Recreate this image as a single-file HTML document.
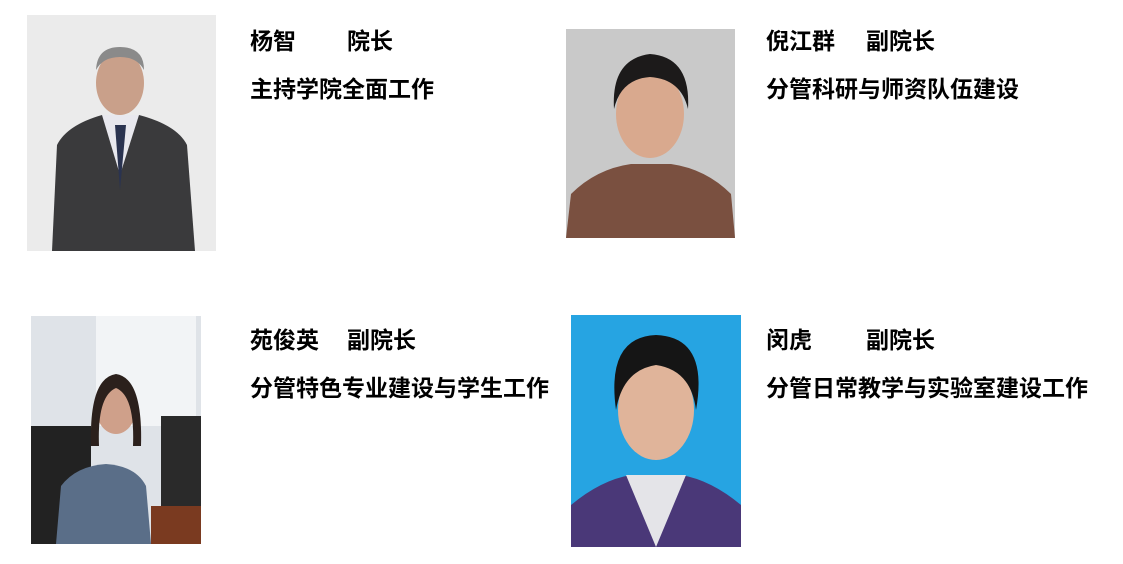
<!DOCTYPE html>
<html><head><meta charset="utf-8"><style>
body{margin:0;width:1123px;height:564px;background:#fff;position:relative;overflow:hidden;font-family:"Liberation Sans","Noto Sans CJK SC",sans-serif;}
.t{position:absolute;font-size:23px;font-weight:bold;color:#000;white-space:nowrap;line-height:26px;}
svg{position:absolute;}
</style></head><body>
<svg style="left:27px;top:15px" width="189" height="236" viewBox="0 0 189 236">
<rect width="189" height="236" fill="#ebebeb"/>
<path d="M25 236 L30 130 Q40 110 75 100 L112 100 Q150 110 160 130 L168 236 Z" fill="#3a3a3c"/>
<path d="M75 100 L93 160 L112 100 Z" fill="#e8e8ee"/>
<path d="M88 110 L93 175 L99 110 Z" fill="#2a3350"/>
<ellipse cx="93" cy="68" rx="24" ry="32" fill="#c9a08a"/>
<path d="M69 55 Q70 32 93 32 Q117 32 117 55 Q110 42 93 42 Q76 42 69 55Z" fill="#8a8a8a"/>
</svg>
<svg style="left:566px;top:29px" width="169" height="209" viewBox="0 0 169 209">
<rect width="169" height="209" fill="#c9c9c9"/>
<path d="M0 209 L5 165 Q30 140 65 135 L105 135 Q140 140 165 165 L169 209 Z" fill="#7a5040"/>
<ellipse cx="84" cy="85" rx="34" ry="44" fill="#d9a98e"/>
<path d="M48 80 Q45 30 84 25 Q125 28 122 80 Q115 50 84 48 Q55 50 48 80Z" fill="#1c1a1a"/>
</svg>
<svg style="left:31px;top:316px" width="170" height="228" viewBox="0 0 170 228">
<rect width="170" height="228" fill="#dfe3e8"/>
<rect x="65" y="0" width="100" height="110" fill="#f2f4f6"/>
<rect x="130" y="100" width="40" height="128" fill="#2a2a2a"/>
<rect x="0" y="110" width="60" height="118" fill="#222"/>
<path d="M25 228 L30 170 Q45 150 75 148 Q105 150 115 170 L120 228 Z" fill="#5a6e88"/>
<ellipse cx="85" cy="92" rx="20" ry="26" fill="#cfa08a"/>
<path d="M60 130 Q58 62 85 58 Q112 62 110 130 L102 130 Q104 80 85 72 Q66 80 68 130Z" fill="#2b201c"/>
<rect x="120" y="190" width="50" height="38" fill="#7a3a20"/>
</svg>
<svg style="left:571px;top:315px" width="170" height="232" viewBox="0 0 170 232">
<rect width="170" height="232" fill="#26a4e2"/>
<path d="M0 232 L0 190 Q30 165 60 160 L110 160 Q140 165 170 190 L170 232 Z" fill="#4a3878"/>
<path d="M55 160 L85 232 L115 160 Z" fill="#e4e4e8"/>
<ellipse cx="85" cy="95" rx="38" ry="50" fill="#e0b49a"/>
<path d="M45 95 Q35 22 85 20 Q138 22 125 95 Q120 55 85 50 Q52 55 45 95Z" fill="#151515"/>
</svg>
<div class="t" style="left:250px;top:28px">杨智</div>
<div class="t" style="left:347px;top:28px">院长</div>
<div class="t" style="left:250px;top:76px">主持学院全面工作</div>
<div class="t" style="left:766px;top:28px">倪江群</div>
<div class="t" style="left:866px;top:28px">副院长</div>
<div class="t" style="left:766px;top:76px">分管科研与师资队伍建设</div>
<div class="t" style="left:250px;top:327px">苑俊英</div>
<div class="t" style="left:347px;top:327px">副院长</div>
<div class="t" style="left:250px;top:375px">分管特色专业建设与学生工作</div>
<div class="t" style="left:766px;top:327px">闵虎</div>
<div class="t" style="left:866px;top:327px">副院长</div>
<div class="t" style="left:766px;top:375px">分管日常教学与实验室建设工作</div>
</body></html>
